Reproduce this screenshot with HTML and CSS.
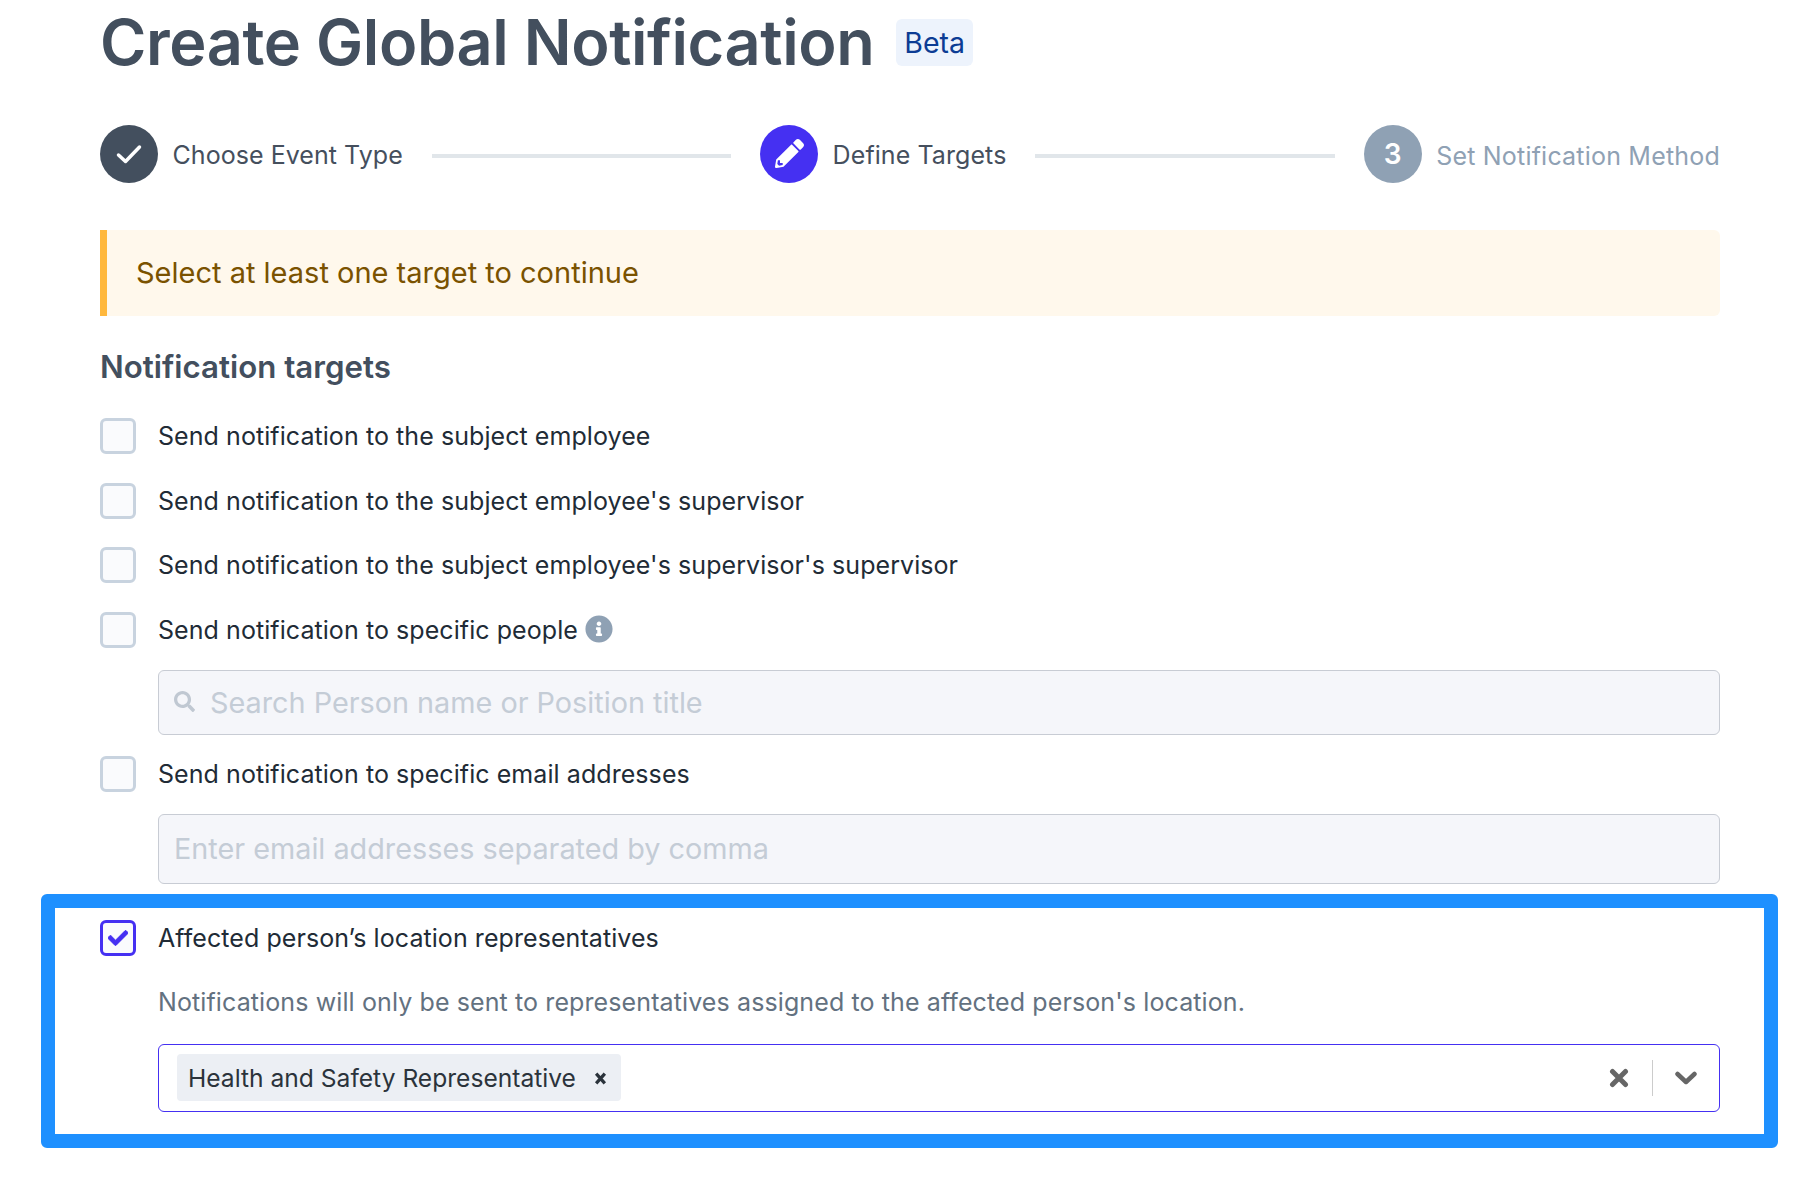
FILE: index.html
```html
<!DOCTYPE html>
<html lang="en">
<head>
<meta charset="utf-8">
<title>Create Global Notification</title>
<link rel="stylesheet" href="styles.css">
</head>
<body>
<main class="page">
  <header class="title-row">
    <h1 class="title">Create Global Notification</h1>
    <span class="badge">Beta</span>
  </header>

  <ol class="steps">
    <li class="step step-done">
      <span class="step-dot"><svg class="icon-done" viewBox="0 0 26 20"><path d="M2.500 11l7 6.500L23.500 3"/></svg></span>
      <span class="step-label">Choose Event Type</span>
    </li>
    <li class="step-line"></li>
    <li class="step step-active">
      <span class="step-dot"><svg class="icon-pencil" viewBox="0 0 512 512"><path d="M497.9 142.1l-46.1 46.1c-4.7 4.7-12.3 4.7-17 0l-111-111c-4.7-4.7-4.7-12.3 0-17l46.1-46.1c18.7-18.7 49.1-18.7 67.9 0l60.1 60.1c18.8 18.7 18.8 49.1 0 67.9zM284.2 99.8L21.6 362.4.4 483.9c-2.9 16.4 11.4 30.6 27.8 27.8l121.5-21.3 262.6-262.6c4.7-4.7 4.7-12.3 0-17l-111-111c-4.8-4.7-12.4-4.7-17.1 0zM88 424h48v36.3l-64.5 11.3-31.1-31.1L51.7 376H88v48z"/></svg></span>
      <span class="step-label">Define Targets</span>
    </li>
    <li class="step-line"></li>
    <li class="step step-todo">
      <span class="step-dot">3</span>
      <span class="step-label">Set Notification Method</span>
    </li>
  </ol>

  <div class="alert">Select at least one target to continue</div>

  <h2 class="section-title">Notification targets</h2>

  <div class="options">
    <label class="option"><span class="box"></span><span class="option-text">Send notification to the subject employee</span></label>
    <label class="option"><span class="box"></span><span class="option-text">Send notification to the subject employee's supervisor</span></label>
    <label class="option"><span class="box"></span><span class="option-text">Send notification to the subject employee's supervisor's supervisor</span></label>
    <label class="option"><span class="box"></span><span class="option-text">Send notification to specific people</span>
      <svg class="icon-info" viewBox="0 0 512 512"><path d="M256 8C119.043 8 8 119.083 8 256c0 136.997 111.043 248 248 248s248-111.003 248-248C504 119.083 392.957 8 256 8zm0 110c23.196 0 42 18.804 42 42s-18.804 42-42 42-42-18.804-42-42 18.804-42 42-42zm56 254c0 6.627-5.373 12-12 12h-88c-6.627 0-12-5.373-12-12v-24c0-6.627 5.373-12 12-12h12v-64h-12c-6.627 0-12-5.373-12-12v-24c0-6.627 5.373-12 12-12h64c6.627 0 12 5.373 12 12v100h12c6.627 0 12 5.373 12 12v24z"/></svg>
    </label>
  </div>

  <div class="field field-search">
    <svg class="icon-search" viewBox="0 0 512 512"><path d="M505 442.7L405.3 343c-4.5-4.5-10.6-7-17-7H372c27.6-35.3 44-79.7 44-128C416 93.1 322.9 0 208 0S0 93.1 0 208s93.1 208 208 208c48.3 0 92.7-16.4 128-44v16.3c0 6.4 2.5 12.5 7 17l99.7 99.7c9.4 9.4 24.6 9.4 33.9 0l28.3-28.3c9.4-9.4 9.4-24.6.1-34zM208 336c-70.7 0-128-57.2-128-128 0-70.7 57.2-128 128-128 70.7 0 128 57.2 128 128 0 70.7-57.2 128-128 128z"/></svg>
    <span class="placeholder">Search Person name or Position title</span>
  </div>

  <label class="option option-email"><span class="box"></span><span class="option-text">Send notification to specific email addresses</span></label>

  <div class="field field-email">
    <span class="placeholder">Enter email addresses separated by comma</span>
  </div>

  <section class="highlight">
    <label class="option"><span class="box box-checked"><svg class="icon-check" viewBox="0 0 512 512"><path d="M173.898 439.404l-166.4-166.4c-9.997-9.997-9.997-26.206 0-36.204l36.203-36.204c9.997-9.998 26.207-9.998 36.204 0L192 312.69 432.095 72.596c9.997-9.997 26.207-9.997 36.204 0l36.203 36.204c9.997 9.997 9.997 26.206 0 36.204l-294.4 294.401c-9.998 9.997-26.207 9.997-36.204-.001z"/></svg></span><span class="option-text">Affected person’s location representatives</span></label>
    <p class="hint">Notifications will only be sent to representatives assigned to the affected person's location.</p>
    <div class="select">
      <span class="tag">Health and Safety Representative<svg class="tag-x" viewBox="0 0 12 12"><path d="M2 1.500l8 9M10 1.500l-8 9"/></svg></span>
      <span class="select-actions">
        <svg class="select-x" viewBox="0 0 20 20"><path d="M3.500 3.500l13 13M16.500 3.500l-13 13"/></svg>
        <span class="select-sep"></span>
        <svg class="select-chevron" viewBox="0 0 22 14"><path d="M2.500 3l8.500 8 8.500-8"/></svg>
      </span>
    </div>
  </section>
</main>
</body>
</html>
```

FILE: styles.css
```css
* { box-sizing: border-box; }
html, body { margin: 0; padding: 0; background: #fff; }
body { font-family: Inter, "Liberation Sans", sans-serif; height: 1190px; overflow: hidden; }
.page { width: 1620px; margin-left: 100px; }

.title-row { display: flex; align-items: center; height: 84px; gap: 22px; }
.title { margin: 0; font-size: 63px; line-height: 84px; font-weight: 600; letter-spacing: -0.4px; color: #434f5e; white-space: nowrap; }
.badge { display: flex; align-items: center; height: 47px; padding: 1px 8px 0; background: #edf3fc; border-radius: 6px; color: #0c3c94; font-size: 28.500px; }

.steps { display: flex; align-items: center; margin: 41px 0 0; padding: 0; list-style: none; gap: 29px; height: 58px; }
.step { display: flex; align-items: center; gap: 14.500px; white-space: nowrap; }
.step-dot { display: flex; align-items: center; justify-content: center; width: 58px; height: 58px; border-radius: 50%; color: #fff; font-size: 28px; font-weight: 600; }
.step-label { padding-top: 2px; font-size: 25px; letter-spacing: 0.05px; color: #454f5d; }
.step-line { flex: 1; height: 4px; margin-top: 4px; background: #e1e6ea; }
.step-done .step-dot { background: #434f5e; }
.step-active .step-dot { background: #4530f2; }
.step-active .step-label { letter-spacing: 0.08px; }
.step-todo .step-dot { background: #8fa1b4; }
.step-todo .step-label { padding-top: 4px; color: #8fa1b4; letter-spacing: 0.2px; }
.icon-done { width: 26px; height: 20px; fill: none; stroke: #fff; stroke-width: 3.500; stroke-linecap: round; stroke-linejoin: round; }
.icon-pencil { width: 29px; height: 29px; margin-top: -2px; fill: #fff; }

.alert { display: flex; align-items: center; height: 86px; margin-top: 47px; padding: 0 0 2px 29px; background: #fff8ec; border-left: 7px solid #ffb83d; border-radius: 0 6px 6px 0; color: #7a5200; font-size: 29px; }

.section-title { margin: 30px 0 0; height: 40px; font-size: 31.250px; line-height: 42px; font-weight: 600; color: #434f5e; }

.options { display: flex; flex-direction: column; gap: 28.670px; margin-top: 32px; }
.option { display: flex; align-items: center; height: 36px; }
.box { flex: none; display: flex; align-items: center; justify-content: center; width: 36px; height: 36px; margin-right: 22px; border: 3px solid #c8d3df; border-radius: 6px; background: #fafbfd; }
.box-checked { border-color: #4530f2; }
.option-text { font-size: 25px; letter-spacing: 0.07px; color: #212b36; white-space: nowrap; }
.icon-info { width: 28px; height: 28px; margin: -2px 0 0 7px; fill: #8fa1b4; }
.icon-check { width: 20px; height: 20px; fill: #4530f2; stroke: #4530f2; stroke-width: 24; }

.field { display: flex; align-items: center; margin-left: 58px; background: #f5f6fa; border: 1px solid #c8ccd4; border-radius: 6px; }
.field-search { height: 65px; margin-top: 22px; padding-left: 15px; }
.field-email { height: 70px; margin-top: 22px; padding: 0 0 2px 15px; }
.placeholder { padding-top: 1px; font-size: 28.800px; color: #c4ccd6; white-space: nowrap; }
.icon-search { width: 21px; height: 21px; margin: -2px 15px 0 0; fill: #c0c8d2; }
.option-email { margin-top: 21px; }

.highlight { margin: 10px -58px 0 -59px; padding: 12px 44px 0 45px; border: 14px solid #1e90ff; border-radius: 6px; height: 254px; }
.hint { margin: 26px 0 22px 58px; font-size: 25px; line-height: 40px; letter-spacing: 0.11px; color: #637180; white-space: nowrap; }
.select { display: flex; align-items: center; justify-content: space-between; height: 68px; margin-left: 58px; padding: 0 22px 0 18px; border: 1px solid #4530f2; border-radius: 6px; }
.tag { display: flex; align-items: center; height: 47px; padding: 1px 14px 0 11px; background: #eceff4; border-radius: 4px; font-size: 24.600px; color: #2b333b; white-space: nowrap; }
.tag-x { width: 13px; height: 13px; margin-left: 18px; fill: none; stroke: #2b333b; stroke-width: 3; }
.select-actions { display: flex; align-items: center; }
.select-x { width: 20px; height: 20px; fill: none; stroke: #666; stroke-width: 5; stroke-linecap: round; }
.select-sep { width: 1px; height: 36px; margin: 0 22px 0 23px; background: #ccc; }
.select-chevron { width: 22px; height: 14px; fill: none; stroke: #666; stroke-width: 4.500; stroke-linecap: round; stroke-linejoin: round; }
```
